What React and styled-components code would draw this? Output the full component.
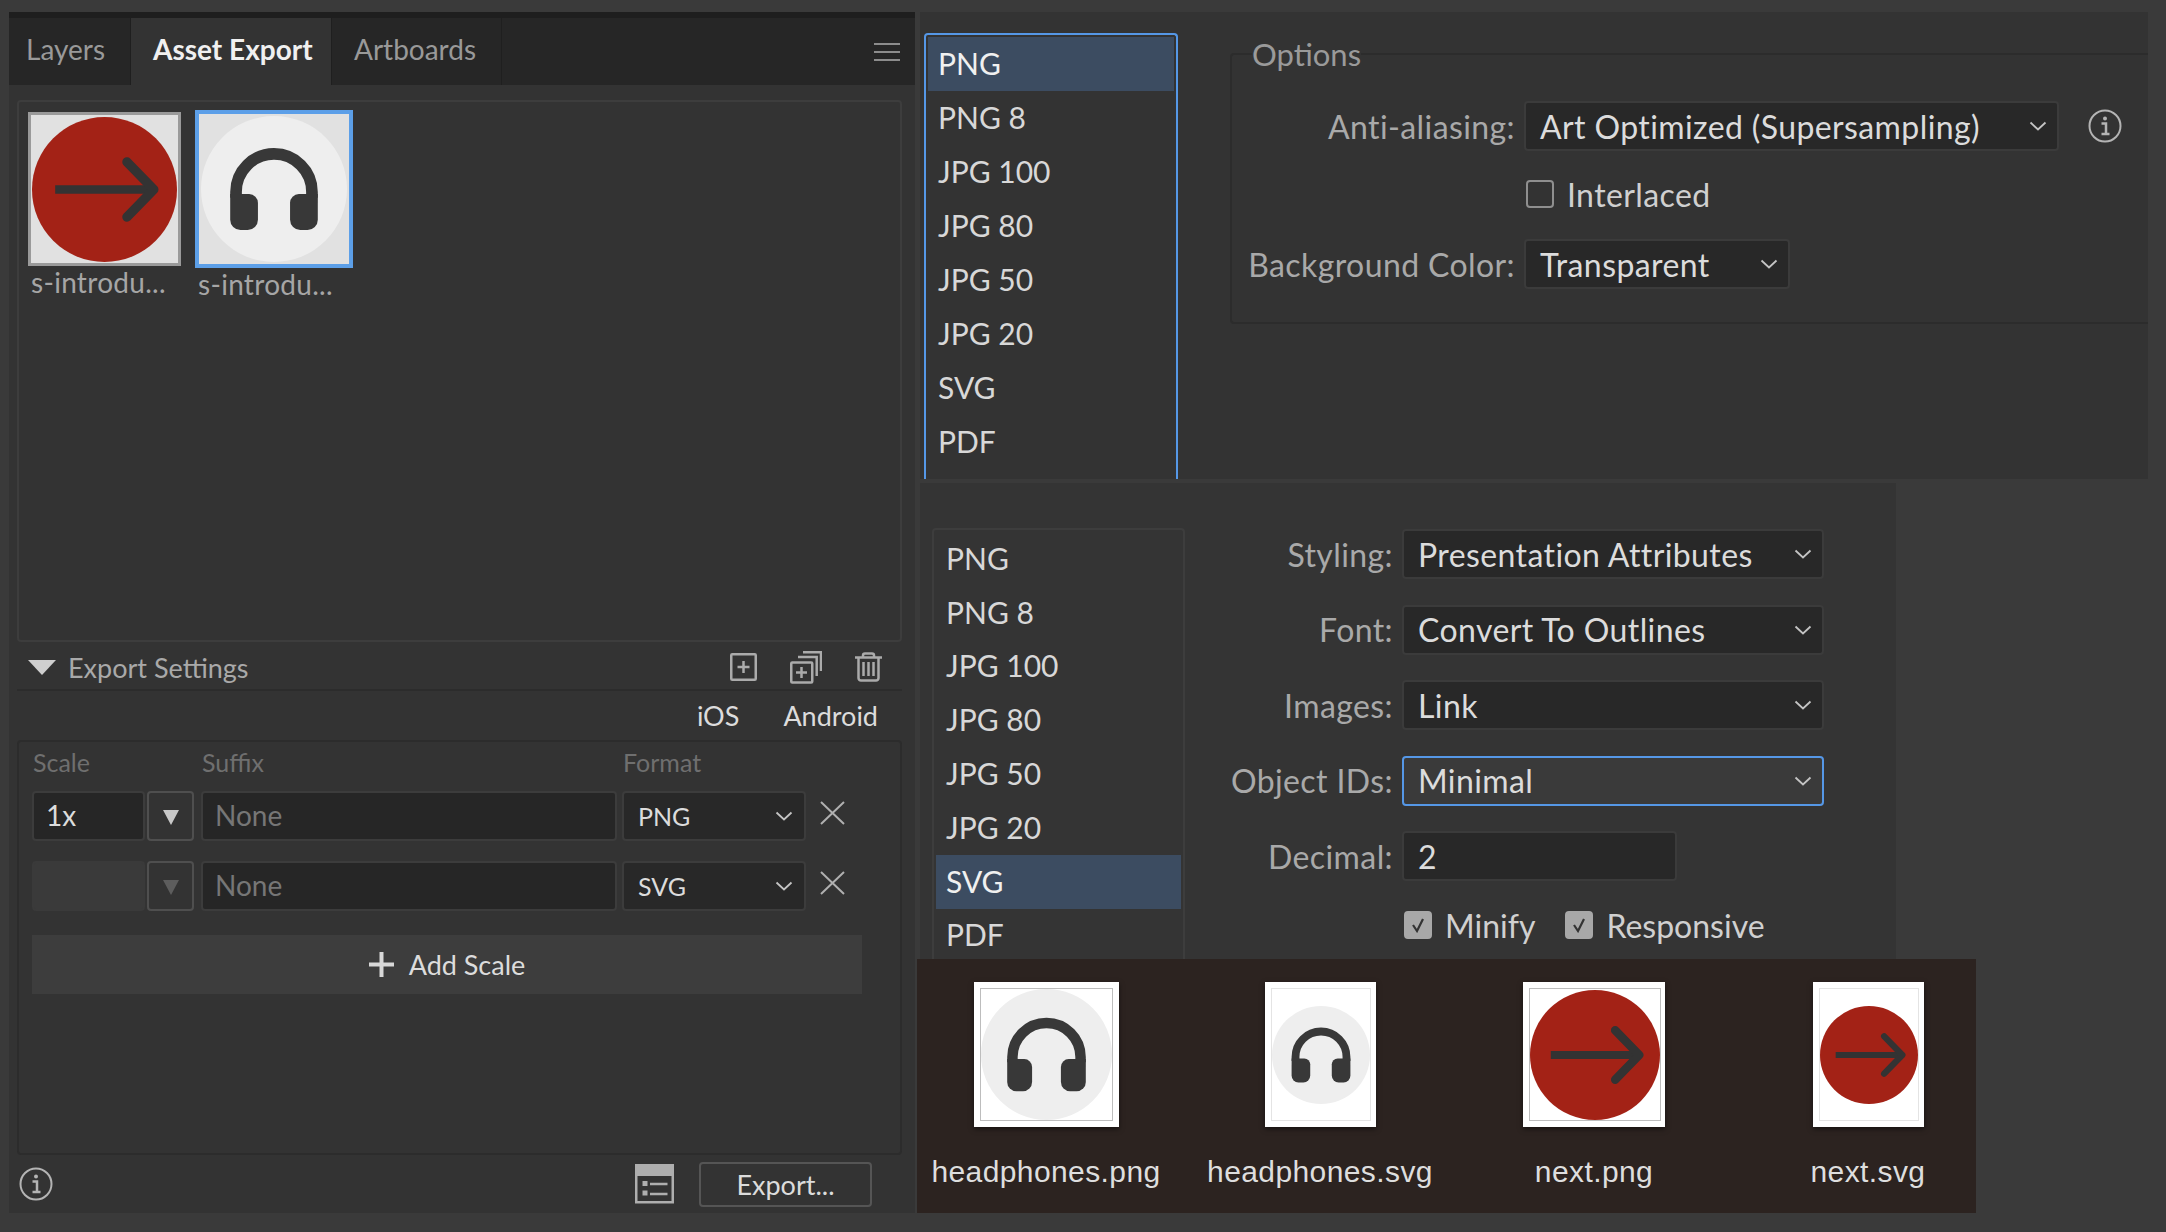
import React from "react";
import styled, { createGlobalStyle } from "styled-components";

const UI_FONT = `"Lato", "Open Sans", sans-serif`;

const formats = ["PNG", "PNG 8", "JPG 100", "JPG 80", "JPG 50", "JPG 20", "SVG", "PDF"];

const GlobalStyle = createGlobalStyle`
  html, body {
    margin: 0;
    padding: 0;
    background: #3a3a3a;
  }
  * {
    box-sizing: border-box;
  }
`;

const Page = styled.div`
  width: 2166px;
  height: 1232px;
  padding: 12px 0 0 9px;
  display: grid;
  grid-template-columns: 906px 1fr;
  column-gap: 2px;
  align-items: start;
  overflow: hidden;
  background: #3a3a3a;
  font-family: ${UI_FONT};
  font-size: 27px;
  color: #a9a9a9;
`;

/* left panel */
const LeftPanel = styled.section`
  height: 1201px;
  display: flex;
  flex-direction: column;
  background: #333333;
`;

const TabBar = styled.div`
  height: 73px;
  flex: none;
  display: flex;
  align-items: stretch;
  background: #262626;
  border-top: 6px solid #1e1e1e;
`;

const Tab = styled.div`
  display: flex;
  align-items: center;
  width: ${(p) => p.$w}px;
  padding: 0 0 5px ${(p) => p.$pad}px;
  background: ${(p) => (p.$active ? "#333333" : "transparent")};
  color: ${(p) => (p.$active ? "#f0f0f0" : "#999999")};
  font-weight: ${(p) => (p.$active ? 700 : 400)};
  font-size: 28px;
  border-right: 1px solid #1f1f1f;
`;

const TabMenu = styled.div`
  margin-left: auto;
  margin-right: 15px;
  align-self: center;
  display: flex;
`;

const ThumbBox = styled.div`
  margin: 15px 13px 0 8px;
  height: 542px;
  flex: none;
  display: flex;
  align-items: flex-start;
  gap: 14px;
  padding: 8px 0 0 9px;
  border: 2px solid #3d3d3d;
  border-radius: 4px;
`;

const ThumbItem = styled.div`
  display: flex;
  flex-direction: column;
  width: ${(p) => (p.$selected ? 158 : 153)}px;
  margin-top: ${(p) => (p.$selected ? 0 : 2)}px;
`;

const Thumb = styled.div`
  height: ${(p) => (p.$selected ? 158 : 154)}px;
  display: flex;
  align-items: center;
  justify-content: center;
  background: #e1e1e1;
  border: ${(p) => (p.$selected ? "4px solid #5c9fe8" : "3px solid #9a9a9a")};
`;

const ThumbName = styled.div`
  margin: 1px 0 0 3px;
  font-size: 28px;
  line-height: 30px;
  letter-spacing: 0.3px;
  color: #a6a6a6;
  white-space: nowrap;
`;

const SectionHeader = styled.div`
  height: 49px;
  flex: none;
  display: flex;
  align-items: center;
  margin: 0 13px 0 8px;
  padding: 3px 20px 0 11px;
  border-bottom: 2px solid #2c2c2c;
  font-size: 27px;
  color: #a9a9a9;
`;

const Disclosure = styled.span`
  width: 0;
  height: 0;
  margin-right: 12px;
  border-left: 14px solid transparent;
  border-right: 14px solid transparent;
  border-top: 15px solid #cfcfcf;
`;

const HeaderIcons = styled.div`
  margin-left: auto;
  display: flex;
  align-items: center;
  gap: 33px;
`;

const PlatformRow = styled.div`
  height: 49px;
  flex: none;
  display: flex;
  justify-content: flex-end;
  align-items: center;
  gap: 44px;
  padding-right: 37px;
  font-size: 27px;
  color: #dcdcdc;
`;

const ScaleBox = styled.div`
  height: 415px;
  flex: none;
  margin: 0 13px 0 8px;
  padding: 0 13px;
  border: 2px solid #2c2c2c;
  border-radius: 4px;
`;

const ColumnHeads = styled.div`
  height: 49px;
  padding-bottom: 9px;
  display: flex;
  align-items: center;
  font-size: 25px;
  color: #6f6f6f;
`;

const ColumnHead = styled.span`
  width: ${(p) => p.$w}px;
  padding-left: 1px;
`;

const ScaleRow = styled.div`
  height: 50px;
  display: flex;
  align-items: stretch;
  margin-bottom: 20px;
`;

const ScaleInput = styled.div`
  width: 113px;
  display: flex;
  align-items: center;
  padding: 0 0 2px 12px;
  background: ${(p) => (p.$disabled ? "#3a3a3a" : "#262626")};
  border: 2px solid ${(p) => (p.$disabled ? "#3a3a3a" : "#3c3c3c")};
  border-radius: 4px;
  font-size: 28px;
  color: #dcdcdc;
`;

const StepButton = styled.div`
  width: 47px;
  margin: 0 7px 0 2px;
  display: flex;
  align-items: center;
  justify-content: center;
  border: 2px solid #4f4f4f;
  border-radius: 4px;
  &::before {
    content: "";
    margin-top: 3px;
    border-left: 8px solid transparent;
    border-right: 8px solid transparent;
    border-top: 15px solid ${(p) => (p.$disabled ? "#5d5d5d" : "#c8c8c8")};
  }
`;

const SuffixInput = styled.div`
  width: 416px;
  display: flex;
  align-items: center;
  padding: 0 0 2px 12px;
  background: #262626;
  border: 2px solid #3c3c3c;
  border-radius: 4px;
  font-size: 28px;
  color: #767676;
`;

const FormatSelect = styled.div`
  width: 184px;
  margin-left: 5px;
  display: flex;
  align-items: center;
  justify-content: space-between;
  padding: 0 11px 0 14px;
  background: #282828;
  border: 2px solid #3c3c3c;
  border-radius: 4px;
  font-size: 25px;
  color: #dcdcdc;
`;

const RemoveButton = styled.div`
  margin-left: 14px;
  padding-top: 10px;
  display: flex;
  align-items: flex-start;
`;

const AddScale = styled.div`
  width: 830px;
  height: 59px;
  margin-top: 24px;
  display: flex;
  align-items: center;
  justify-content: center;
  gap: 15px;
  background: #3d3d3d;
  font-size: 27px;
  color: #dcdcdc;
`;

const FooterBar = styled.div`
  flex: 1;
  display: flex;
  align-items: center;
  padding: 0 43px 0 10px;
`;

const FooterSpacer = styled.span`
  flex: 1;
`;

const ExportButton = styled.div`
  width: 173px;
  height: 45px;
  margin-left: 25px;
  display: flex;
  align-items: center;
  justify-content: center;
  border: 2px solid #555555;
  border-radius: 4px;
  font-size: 27px;
  color: #dcdcdc;
`;

/* right column */
const RightColumn = styled.div`
  display: flex;
  flex-direction: column;
`;

const OptionsPanel = styled.section`
  width: 1228px;
  height: 467px;
  margin-left: 3px;
  padding: 21px 0 0 4px;
  display: flex;
  background: #333333;
`;

const FormatList = styled.div`
  flex: none;
  display: flex;
  flex-direction: column;
  width: ${(p) => p.$w}px;
  padding: ${(p) => p.$top}px 2px 0;
  border: 2px solid ${(p) => (p.$focus ? "#5597e6" : "#3d3d3d")};
  border-bottom: none;
  border-radius: 4px 4px 0 0;
  overflow: hidden;
`;

const FormatRow = styled.div`
  height: ${(p) => p.$h}px;
  flex: none;
  display: flex;
  align-items: center;
  padding: 0 0 2px 10px;
  font-size: 30px;
  background: ${(p) => (p.$selected ? "#3c4c61" : "transparent")};
  color: ${(p) => (p.$selected ? "#f0f0f0" : "#d8d8d8")};
`;

const Options = styled.fieldset`
  flex: 1;
  height: 287px;
  min-width: 0;
  margin: 4px 0 0 52px;
  padding: 30px 0 0;
  border: 2px solid #2c2c2c;
  border-right: none;
  border-radius: 4px 0 0 4px;
`;

const OptionsTitle = styled.legend`
  margin-left: 20px;
  padding: 3px 0;
  line-height: 28px;
  font-size: 31px;
  background: #333333;
  color: #9a9a9a;
`;

const FormRow = styled.div`
  height: ${(p) => p.$h || 50}px;
  display: flex;
  align-items: center;
  margin-bottom: ${(p) => p.$gap || 0}px;
  font-size: 32px;
  letter-spacing: 0.4px;
`;

const FieldLabel = styled.label`
  width: ${(p) => p.$w}px;
  margin-right: 9px;
  flex: none;
  text-align: right;
  color: #a9a9a9;
  white-space: nowrap;
`;

const Select = styled.div`
  width: ${(p) => p.$w}px;
  height: 50px;
  display: flex;
  align-items: center;
  justify-content: space-between;
  padding: 0 10px 0 14px;
  background: ${(p) => (p.$focus ? "#3a3a3a" : "#282828")};
  border: 2px solid ${(p) => (p.$focus ? "#5597e6" : "#3b3b3b")};
  border-radius: 4px;
  color: #dcdcdc;
  white-space: nowrap;
`;

const CheckRow = styled.div`
  display: flex;
  align-items: center;
  gap: 13px;
  margin-left: ${(p) => p.$indent || 0}px;
  font-size: 32px;
  color: #d0d0d0;
`;

const CheckBox = styled.span`
  width: 28px;
  height: 28px;
  flex: none;
  display: flex;
  align-items: center;
  justify-content: center;
  border-radius: 4px;
  background: ${(p) => (p.$checked ? "#a8a8a8" : "transparent")};
  border: 2px solid ${(p) => (p.$checked ? "#a8a8a8" : "#8f8f8f")};
`;

const OptionsInfo = styled.span`
  margin-left: 29px;
  display: flex;
`;

const SvgPanel = styled.section`
  width: 976px;
  height: 476px;
  margin: 4px 0 0 3px;
  padding: 45px 0 0 12px;
  display: flex;
  background: #343434;
`;

const SvgOptions = styled.div`
  display: flex;
  flex-direction: column;
  gap: 25.6px;
  margin-top: 1px;
`;

const CheckGroup = styled.div`
  display: flex;
  gap: 30px;
  margin: -1px 0 0 219px;
`;

const FilesPanel = styled.section`
  width: 1059px;
  height: 254px;
  padding: 23px 0 0 13px;
  display: grid;
  grid-template-columns: repeat(4, 232px);
  column-gap: 42px;
  align-items: start;
  background: #2c2320;
  overflow: hidden;
`;

const FileItem = styled.div`
  display: flex;
  flex-direction: column;
  align-items: center;
`;

const FileCard = styled.div`
  width: ${(p) => p.$w}px;
  height: 145px;
  display: flex;
  padding: 6px;
  background: #ffffff;
  box-shadow: 0 2px 5px rgba(0, 0, 0, 0.5);
`;

const FileInner = styled.div`
  flex: 1;
  display: flex;
  align-items: center;
  justify-content: center;
  border: 1px solid ${(p) => (p.$light ? "#e4e4e4" : "#bdbdbd")};
`;

const FileName = styled.div`
  margin-top: 27px;
  font-family: "Liberation Sans", Arial, sans-serif;
  font-size: 30px;
  line-height: 36px;
  letter-spacing: 0.4px;
  color: #dedede;
  white-space: nowrap;
`;

/* drawings */
function NextIcon({ size }) {
  return (
    <svg width={size} height={size} viewBox="0 0 100 100">
      <circle cx="50" cy="50" r="50" fill="#a32216" />
      <path d="M16 50H84" stroke="#333" strokeWidth="6" fill="none" />
      <path d="M65.500 31L84 50L65.500 69" stroke="#333" strokeWidth="6.500" fill="none" strokeLinecap="round" strokeLinejoin="round" />
    </svg>
  );
}

function HeadphonesIcon({ size }) {
  return (
    <svg width={size} height={size} viewBox="0 0 100 100">
      <circle cx="50" cy="50" r="50" fill="#eeeeee" />
      <path d="M24 56V52A26 26 0 0 1 76 52V56" stroke="#383838" strokeWidth="8" fill="none" />
      <path d="M20 53.500H33A6 6 0 0 1 39 59.500V71A7 7 0 0 1 32 78H27A7 7 0 0 1 20 71Z" fill="#383838" />
      <path d="M80 53.500H67A6 6 0 0 0 61 59.500V71A7 7 0 0 0 68 78H73A7 7 0 0 0 80 71Z" fill="#383838" />
    </svg>
  );
}

function Chevron() {
  return (
    <svg width="18" height="10" viewBox="0 0 18 10">
      <path d="M1.500 1.500L9 8.500L16.500 1.500" stroke="#c4c4c4" strokeWidth="1.800" fill="none" />
    </svg>
  );
}

function InfoIcon({ size }) {
  return (
    <svg width={size} height={size} viewBox="0 0 34 34" fill="none" stroke="#b4b4b4">
      <circle cx="17" cy="17" r="15.500" strokeWidth="2" />
      <circle cx="17" cy="9.500" r="2" fill="#b4b4b4" stroke="none" />
      <path d="M13.500 14.500H18V24M13.500 25H21.500" strokeWidth="2.500" />
    </svg>
  );
}

function MenuIcon() {
  return (
    <svg width="26" height="18" viewBox="0 0 26 18" stroke="#8c8c8c" strokeWidth="2">
      <path d="M0 1H26M0 9H26M0 17H26" />
    </svg>
  );
}

function NewFrameIcon() {
  return (
    <svg width="27" height="28" viewBox="0 0 27 28" fill="none" stroke="#ababab" strokeWidth="2.500">
      <rect x="1.250" y="1.250" width="24.500" height="25.500" rx="1" />
      <path d="M13.500 8V20M7.500 14H19.500" />
    </svg>
  );
}

function DuplicateIcon() {
  return (
    <svg width="32" height="33" viewBox="0 0 32 33" fill="none" stroke="#ababab" strokeWidth="2.500">
      <rect x="1.250" y="11.500" width="21" height="20" rx="1" />
      <path d="M8 6H26.700V25M13 1.250H31V20" />
      <path d="M11.500 16V27M6 21.500H17" />
    </svg>
  );
}

function TrashIcon() {
  return (
    <svg width="27" height="30" viewBox="0 0 27 30" fill="none" stroke="#ababab" strokeWidth="2.500">
      <path d="M0 5.500H27M3.500 5.500V26A2.500 2.500 0 0 0 6 28.500H21A2.500 2.500 0 0 0 23.500 26V5.500" />
      <path d="M8 5.500V3.500A2 2 0 0 1 10 1.500H17A2 2 0 0 1 19 3.500V5.500" />
      <path d="M8.500 10V24M13.500 10V24M18.500 10V24" />
    </svg>
  );
}

function RemoveIcon() {
  return (
    <svg width="25" height="24" viewBox="0 0 25 24" stroke="#b0b0b0" strokeWidth="2">
      <path d="M1 1L24 23M24 1L1 23" />
    </svg>
  );
}

function PlusIcon() {
  return (
    <svg width="25" height="25" viewBox="0 0 25 25" stroke="#d8d8d8" strokeWidth="4">
      <path d="M12.500 0V25M0 12.500H25" />
    </svg>
  );
}

function ListViewIcon() {
  return (
    <svg width="39" height="40" viewBox="0 0 39 40" fill="none">
      <rect x="0" y="0" width="39" height="12" fill="#aeaeae" />
      <rect x="1.250" y="1.250" width="36.500" height="37" stroke="#aeaeae" strokeWidth="2.500" />
      <rect x="7.500" y="17" width="5" height="5" fill="#aeaeae" />
      <rect x="7.500" y="26.500" width="5" height="5" fill="#aeaeae" />
      <path d="M15 20H32.500M15 30H32.500" stroke="#aeaeae" strokeWidth="2.500" />
    </svg>
  );
}

function CheckMark() {
  return (
    <svg width="14" height="16" viewBox="0 0 14 16" fill="none" stroke="#333" strokeWidth="2.200">
      <path d="M2 8L6 14L12 2" />
    </svg>
  );
}

function FormatOptionsList({ w, top, rowH, selected, focus }) {
  return (
    <FormatList $w={w} $top={top} $focus={focus}>
      {formats.map((f) => (
        <FormatRow key={f} $h={rowH} $selected={f === selected}>
          {f}
        </FormatRow>
      ))}
    </FormatList>
  );
}

const files = [
  { name: "headphones.png", w: 145, Icon: HeadphonesIcon, size: 131 },
  { name: "headphones.svg", w: 111, Icon: HeadphonesIcon, size: 98, light: true },
  { name: "next.png", w: 142, Icon: NextIcon, size: 130 },
  { name: "next.svg", w: 111, Icon: NextIcon, size: 98, light: true },
];

export default function App() {
  return (
    <>
      <GlobalStyle />
      <Page>
        <LeftPanel>
          <TabBar>
            <Tab $w={122} $pad={17}>Layers</Tab>
            <Tab $w={201} $pad={22} $active>Asset Export</Tab>
            <Tab $w={170} $pad={22}>Artboards</Tab>
            <TabMenu>
              <MenuIcon />
            </TabMenu>
          </TabBar>

          <ThumbBox>
            <ThumbItem>
              <Thumb>
                <NextIcon size={145} />
              </Thumb>
              <ThumbName>s-introdu...</ThumbName>
            </ThumbItem>
            <ThumbItem $selected>
              <Thumb $selected>
                <HeadphonesIcon size={146} />
              </Thumb>
              <ThumbName>s-introdu...</ThumbName>
            </ThumbItem>
          </ThumbBox>

          <SectionHeader>
            <Disclosure />
            Export Settings
            <HeaderIcons>
              <NewFrameIcon />
              <DuplicateIcon />
              <TrashIcon />
            </HeaderIcons>
          </SectionHeader>

          <PlatformRow>
            <span>iOS</span>
            <span>Android</span>
          </PlatformRow>

          <ScaleBox>
            <ColumnHeads>
              <ColumnHead $w={169}>Scale</ColumnHead>
              <ColumnHead $w={421}>Suffix</ColumnHead>
              <ColumnHead $w={180}>Format</ColumnHead>
            </ColumnHeads>
            <ScaleRow>
              <ScaleInput>1x</ScaleInput>
              <StepButton />
              <SuffixInput>None</SuffixInput>
              <FormatSelect>
                PNG
                <Chevron />
              </FormatSelect>
              <RemoveButton>
                <RemoveIcon />
              </RemoveButton>
            </ScaleRow>
            <ScaleRow>
              <ScaleInput $disabled />
              <StepButton $disabled />
              <SuffixInput>None</SuffixInput>
              <FormatSelect>
                SVG
                <Chevron />
              </FormatSelect>
              <RemoveButton>
                <RemoveIcon />
              </RemoveButton>
            </ScaleRow>
            <AddScale>
              <PlusIcon />
              Add Scale
            </AddScale>
          </ScaleBox>

          <FooterBar>
            <InfoIcon size={34} />
            <FooterSpacer />
            <ListViewIcon />
            <ExportButton>Export...</ExportButton>
          </FooterBar>
        </LeftPanel>

        <RightColumn>
          <OptionsPanel>
            <FormatOptionsList w={254} top={2} rowH={54} selected="PNG" focus />
            <Options>
              <OptionsTitle>Options</OptionsTitle>
              <FormRow $gap={29}>
                <FieldLabel $w={283}>Anti-aliasing:</FieldLabel>
                <Select $w={535}>
                  Art Optimized (Supersampling)
                  <Chevron />
                </Select>
                <OptionsInfo>
                  <InfoIcon size={34} />
                </OptionsInfo>
              </FormRow>
              <FormRow $h={28} $gap={31}>
                <CheckRow $indent={294}>
                  <CheckBox />
                  Interlaced
                </CheckRow>
              </FormRow>
              <FormRow>
                <FieldLabel $w={283}>Background Color:</FieldLabel>
                <Select $w={266}>
                  Transparent
                  <Chevron />
                </Select>
              </FormRow>
            </Options>
          </OptionsPanel>

          <SvgPanel>
            <FormatOptionsList w={253} top={2} rowH={53.8} selected="SVG" />
            <SvgOptions>
              <FormRow>
                <FieldLabel $w={208}>Styling:</FieldLabel>
                <Select $w={422}>
                  Presentation Attributes
                  <Chevron />
                </Select>
              </FormRow>
              <FormRow>
                <FieldLabel $w={208}>Font:</FieldLabel>
                <Select $w={422}>
                  Convert To Outlines
                  <Chevron />
                </Select>
              </FormRow>
              <FormRow>
                <FieldLabel $w={208}>Images:</FieldLabel>
                <Select $w={422}>
                  Link
                  <Chevron />
                </Select>
              </FormRow>
              <FormRow>
                <FieldLabel $w={208}>Object IDs:</FieldLabel>
                <Select $w={422} $focus>
                  Minimal
                  <Chevron />
                </Select>
              </FormRow>
              <FormRow>
                <FieldLabel $w={208}>Decimal:</FieldLabel>
                <Select $w={275}>2</Select>
              </FormRow>
              <CheckGroup>
                <CheckRow>
                  <CheckBox $checked>
                    <CheckMark />
                  </CheckBox>
                  Minify
                </CheckRow>
                <CheckRow>
                  <CheckBox $checked>
                    <CheckMark />
                  </CheckBox>
                  Responsive
                </CheckRow>
              </CheckGroup>
            </SvgOptions>
          </SvgPanel>

          <FilesPanel>
            {files.map(({ name, w, Icon, size, light }) => (
              <FileItem key={name}>
                <FileCard $w={w}>
                  <FileInner $light={light}>
                    <Icon size={size} />
                  </FileInner>
                </FileCard>
                <FileName>{name}</FileName>
              </FileItem>
            ))}
          </FilesPanel>
        </RightColumn>
      </Page>
    </>
  );
}
